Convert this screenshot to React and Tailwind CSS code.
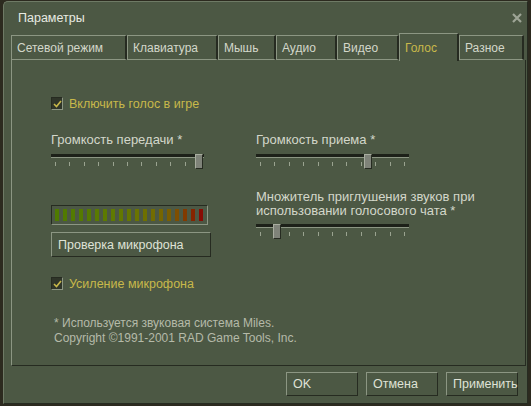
import React from 'react';

const tabs = [
  { label: 'Сетевой режим', w: 'w-[116px]' },
  { label: 'Клавиатура', w: 'w-[91px]' },
  { label: 'Мышь', w: 'w-[58px]' },
  { label: 'Аудио', w: 'w-[61px]' },
  { label: 'Видео', w: 'w-[62px]' },
  { label: 'Голос', w: 'w-[60px]', active: true },
  { label: 'Разное', w: 'w-[65px]' },
];

const meterColors = [
  '#4f7a00', '#517a00', '#537a00', '#557a00', '#577a00', '#5a7a00',
  '#5d7a00', '#607a00', '#637800', '#667600', '#6a7400', '#6e7000',
  '#726c00', '#766600', '#7a5e00', '#7e4e00', '#823a00', '#862400', '#880c04',
];

const Check = ({ label }) => (
  <div className="flex items-center gap-[6px] h-[13px]">
    <div className="w-[12px] h-[13px] bg-[#2f3529] border-t border-l border-[#262b21] border-r border-b border-r-[#8c9683] border-b-[#8c9683] flex items-center justify-center">
      <svg width="9" height="8" viewBox="0 0 9 8">
        <path d="M1 4 L3.5 6.5 L8 1" stroke="#c8b84a" strokeWidth="1.6" fill="none" />
      </svg>
    </div>
    <span className="text-[#c8b84a]">{label}</span>
  </div>
);

const Slider = ({ pos }) => (
  <div className="relative w-[153px] h-[19px]">
    <div className="mt-[6px] h-[4px] bg-[#1d2119] border-b border-[#8c9683]" />
    <div className="flex justify-between px-[4px] mt-[4px]">
      {Array.from({ length: 11 }).map((_, i) => (
        <div key={i} className="w-px h-[4px] bg-[#9aa390]" />
      ))}
    </div>
    <div
      className="absolute top-0 w-[8px] h-[15px] bg-[#7f8379] border-t border-l border-[#a8ad9f] border-r border-b border-r-[#262b21] border-b-[#262b21]"
      style={{ left: pos }}
    />
  </div>
);

const Btn = ({ children, className = '' }) => (
  <div className={`h-[24px] flex items-center pl-[6px] border border-t-[#8c9683] border-l-[#8c9683] border-r-[#262b21] border-b-[#262b21] text-[#dfe2d6] ${className}`}>
    {children}
  </div>
);

export default function App() {
  return (
    <div
      className="w-[531px] h-[406px] bg-[#2c2a1f] overflow-hidden text-[12.5px] leading-[14px] text-[#d3d7ca]"
      style={{ fontFamily: '"Liberation Sans", Arial, sans-serif' }}
    >
      <div className="ml-[3px] mt-[1px] w-[525px] h-[403px] bg-[#4c5844] rounded-tl-[5px] border-l border-t border-[#6e7a65] border-r border-r-[#262b21] border-b border-b-[#262b21]">
        {/* Title */}
        <div className="h-[31px] flex items-center justify-between pl-[14px] pr-[5px]">
          <span className="text-[#e8eae2] text-[12.5px]">Параметры</span>
          <svg width="10" height="10" viewBox="0 0 10 10">
            <path d="M1 1 L9 9 M9 1 L1 9" stroke="#9ea596" strokeWidth="2.2" />
          </svg>
        </div>

        {/* Tabs */}
        <div className="ml-[7px] flex items-end h-[27px] text-[12px]">
          {tabs.map((t) => (
            <div
              key={t.label}
              className={`${t.w} ${t.active ? 'h-[28px] -mb-px relative bg-[#4c5844] text-[#c8b84a] pt-[7px]' : 'h-[25px] text-[#d3d7ca] pt-[5px] border-b border-b-[#8c9683]'} pl-[5px] border-t border-l border-t-[#8c9683] border-l-[#8c9683] border-r-2 border-r-[#262b21]`}
            >
              {t.label}
            </div>
          ))}
        </div>

        {/* Panel */}
        <div className="ml-[7px] w-[515px] h-[306px] border-l border-[#8c9683] border-r border-r-[#262b21] border-b border-b-[#262b21] pl-[39px] pt-[37px]">
          <Check label="Включить голос в игре" />

          <div className="flex mt-[23px]">
            <div className="w-[205px]">
              <div className="h-[14px] text-[13px]">Громкость передачи *</div>
              <div className="mt-[7px]">
                <Slider pos={144} />
              </div>
              <div className="mt-[32px] w-[157px] h-[20px] border border-[#262b21] border-r-[#8c9683] border-b-[#8c9683] flex items-center gap-[4px] pl-[3px]">
                {meterColors.map((c, i) => (
                  <div key={i} className="w-[4px] h-[12px]" style={{ background: c }} />
                ))}
              </div>
              <Btn className="mt-[7px] w-[160px] h-[25px]">Проверка микрофона</Btn>
            </div>
            <div className="w-[240px]">
              <div className="h-[14px] text-[13px]">Громкость приема *</div>
              <div className="mt-[7px]">
                <Slider pos={108} />
              </div>
              <div className="mt-[17px] leading-[14px] text-[13px] whitespace-nowrap">
                Множитель приглушения звуков при
                <br />
                использовании голосового чата *
              </div>
              <div className="mt-[5px]">
                <Slider pos={17} />
              </div>
            </div>
          </div>

          <div className="mt-[20px]">
            <Check label="Усиление микрофона" />
          </div>

          <div className="mt-[26px] ml-[3px] text-[12px] text-[#b5baa9] leading-[15px]">
            * Используется звуковая система Miles.
            <br />
            Copyright ©1991-2001 RAD Game Tools, Inc.
          </div>
        </div>

        {/* Bottom buttons */}
        <div className="flex justify-end gap-[8px] pr-[9px] mt-[6px]">
          <Btn className="w-[72px] border-[#10120d]">OK</Btn>
          <Btn className="w-[72px]">Отмена</Btn>
          <Btn className="w-[72px]">Применить</Btn>
        </div>
      </div>
    </div>
  );
}
